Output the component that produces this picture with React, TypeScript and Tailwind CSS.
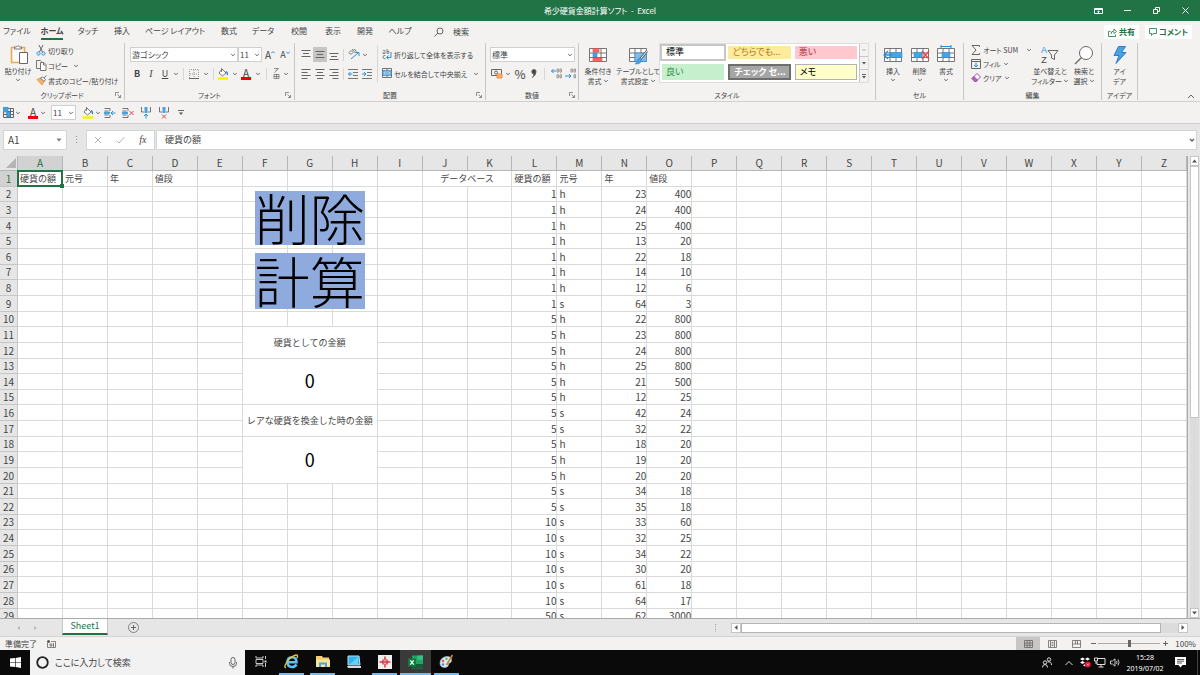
import type { ReactNode } from 'react';
import { clsx } from 'clsx';

const columns = 'ABCDEFGHIJKLMNOPQRSTUVWXYZ'.split('');

// 硬貨の額, 元号, 年, 値段
const coins: [number, string, number, number][] = [
  [1, 'h', 23, 400],
  [1, 'h', 24, 400],
  [1, 'h', 25, 400],
  [1, 'h', 13, 20],
  [1, 'h', 22, 18],
  [1, 'h', 14, 10],
  [1, 'h', 12, 6],
  [1, 's', 64, 3],
  [5, 'h', 22, 800],
  [5, 'h', 23, 800],
  [5, 'h', 24, 800],
  [5, 'h', 25, 800],
  [5, 'h', 21, 500],
  [5, 'h', 12, 25],
  [5, 's', 42, 24],
  [5, 's', 32, 22],
  [5, 'h', 18, 20],
  [5, 'h', 19, 20],
  [5, 'h', 20, 20],
  [5, 's', 34, 18],
  [5, 's', 35, 18],
  [10, 's', 33, 60],
  [10, 's', 32, 25],
  [10, 's', 34, 22],
  [10, 's', 30, 20],
  [10, 's', 61, 18],
  [10, 's', 64, 17],
  [50, 's', 62, 3000],
];

const headings: Record<string, string> = {
  A: '硬貨の額',
  B: '元号',
  C: '年',
  D: '値段',
  L: '硬貨の額',
  M: '元号',
  N: '年',
  O: '値段',
};

interface Merge {
  col: number;
  row: number;
  cols: number;
  rows: number;
  text: string;
  className: string;
}

const merges: Merge[] = [
  { col: 9, row: 1, cols: 2, rows: 1, text: 'データベース', className: 'p-0 text-[9px]' },
  { col: 5, row: 11, cols: 3, rows: 2, text: '硬貨としての金額', className: 'p-0 text-[9px]' },
  { col: 5, row: 13, cols: 3, rows: 3, text: '0', className: 'p-0 pb-[3px] text-lg leading-none text-black' },
  { col: 5, row: 16, cols: 3, rows: 2, text: 'レアな硬貨を換金した時の金額', className: 'p-0 text-[9px]' },
  { col: 5, row: 18, cols: 3, rows: 3, text: '0', className: 'p-0 pb-[3px] text-lg leading-none text-black' },
];

const tabs = [
  { label: 'ファイル', width: 'w-[34px]' },
  { label: 'ホーム', width: 'w-9', active: true },
  { label: 'タッチ', width: 'w-9' },
  { label: '挿入', width: 'w-8' },
  { label: 'ページ レイアウト', width: 'w-[74px]' },
  { label: '数式', width: 'w-[34px]' },
  { label: 'データ', width: 'w-[34px]' },
  { label: '校閲', width: 'w-[38px]' },
  { label: '表示', width: 'w-[30px]' },
  { label: '開発', width: 'w-[34px]' },
  { label: 'ヘルプ', width: 'w-9' },
];

interface IconProps {
  w?: number;
  h?: number;
  className?: string;
  children: ReactNode;
}

function Icon({ w = 14, h = 14, className, children }: IconProps) {
  return (
    <svg
      width={w}
      height={h}
      viewBox={`0 0 ${w} ${h}`}
      fill="none"
      stroke="#666"
      className={clsx('shrink-0', className)}
      aria-hidden="true"
    >
      {children}
    </svg>
  );
}

function Chevron() {
  return (
    <Icon w={6} h={6}>
      <path d="M1.200 2L3 3.800 4.800 2" />
    </Icon>
  );
}

interface ToolProps {
  label: string;
  width?: string;
  className?: string;
  children: ReactNode;
}

function Tool({ label, width = 'w-[14px]', className, children }: ToolProps) {
  return (
    <button
      type="button"
      aria-label={label}
      className={clsx('flex h-[15px] shrink-0 items-center justify-center', width, className)}
    >
      {children}
    </button>
  );
}

function Divider({ className }: { className?: string }) {
  return <span className={clsx('w-px shrink-0 bg-[#d6d6d6]', className ?? 'h-3')} />;
}

interface GroupProps {
  label: string;
  width: string;
  launcher?: boolean;
  children: ReactNode;
}

function Group({ label, width, launcher, children }: GroupProps) {
  return (
    <section
      aria-label={label}
      className={clsx('flex h-[57px] shrink-0 flex-col border-r border-[#c8c6c4]', width)}
    >
      <div className="flex flex-1 items-start">{children}</div>
      <div className="flex h-[10px] items-center">
        {launcher && <span className="w-3" />}
        <span className="flex-1 text-center whitespace-nowrap">{label}</span>
        {launcher && (
          <button type="button" aria-label={`${label}の設定`} className="flex w-3 justify-center">
            <Icon w={6} h={6}>
              <path d="M.5 4V.5H4M2.500 2.500l3 3M5.500 3v2.500H3" strokeWidth=".7" />
            </Icon>
          </button>
        )}
      </div>
    </section>
  );
}

interface BigButtonProps {
  lines: string[];
  width: string;
  caret?: 'below' | 'inline';
  children: ReactNode;
}

function BigButton({ lines, width, caret, children }: BigButtonProps) {
  return (
    <button type="button" className={clsx('flex shrink-0 flex-col items-center whitespace-nowrap', width)}>
      <span className="flex h-[23px] items-center">{children}</span>
      {lines.map((line, i) => (
        <span key={line} className="flex h-[10px] items-center gap-px leading-[10px]">
          {line}
          {caret === 'inline' && i === lines.length - 1 && <Chevron />}
        </span>
      ))}
      {caret === 'below' && (
        <span className="flex h-2 items-center">
          <Chevron />
        </span>
      )}
    </button>
  );
}

function Combo({ label, value, width }: { label: string; value: string; width: string }) {
  return (
    <div className={clsx('flex h-[15px] shrink-0 items-center border border-[#d0d0d0] bg-white pr-px text-[8px]', width)}>
      <select aria-label={label} className="w-full min-w-0 flex-1 appearance-none bg-transparent pl-px leading-3 outline-none">
        <option>{value}</option>
      </select>
      <Chevron />
    </div>
  );
}

function FillIcon() {
  return (
    <Icon w={12} h={13}>
      <path d="M5 2l4 4-3.500 3L2 6z" fill="#fff" strokeWidth=".9" />
      <path d="M4.500 1v4" strokeWidth=".8" />
      <path d="M9 4.500q2 1 1.200 3.500" stroke="#2b7cd3" strokeWidth="1.300" />
      <path d="M1 11.500h10" stroke="#ffef00" strokeWidth="2.500" />
    </Icon>
  );
}

function FontColorIcon() {
  return (
    <span className="flex flex-col items-center">
      <span className="text-[10px] leading-[9px]">A</span>
      <span className="h-[3px] w-[10px] bg-[#f00000]" />
    </span>
  );
}

// Text lines used by the six alignment buttons
function LinesIcon({ d }: { d: string }) {
  return (
    <Icon w={10} h={12}>
      <path d={d} />
    </Icon>
  );
}

function IndentIcon({ out }: { out?: boolean }) {
  return (
    <Icon w={10} h={10}>
      <path d="M0 .5h10M5 3.500h5M5 6.500h5M0 9.500h10" strokeWidth=".9" />
      <path d={out ? 'M4.500 5H.5m2-2l-2 2 2 2' : 'M0 5h4m-2-2l2 2-2 2'} stroke="#2b8fd8" />
    </Icon>
  );
}

function DecimalIcon({ less }: { less?: boolean }) {
  return (
    <Icon w={11} h={11}>
      <g strokeWidth=".7">
        <rect x="6" y=".8" width="1.600" height="3.500" rx=".8" />
        <rect x="9" y=".8" width="1.600" height="3.500" rx=".8" />
        <rect x="6" y="6.500" width="1.600" height="3.500" rx=".8" opacity={less ? 0 : 1} />
        <rect x="9" y="6.500" width="1.600" height="3.500" rx=".8" />
      </g>
      <path d={less ? 'M0 8h6m-2-2l2 2-2 2' : 'M5 3H.5m2-2l-2 2 2 2'} stroke="#2b8fd8" />
    </Icon>
  );
}

function TableIcon({ children }: { children?: ReactNode }) {
  return (
    <Icon w={20} h={20}>
      <path d="M1.500 3.500h17v13h-17zM1.500 8h17M1.500 12.500h17M7 3.500v13M13 3.500v13" fill="#fff" strokeWidth=".9" />
      {children}
    </Icon>
  );
}

function QuickGridIcon({ kind }: { kind: 'insertRow' | 'deleteRow' | 'insertCol' | 'deleteCol' }) {
  const row = kind.endsWith('Row');
  const insert = kind.startsWith('insert');
  return (
    <Icon w={12} h={12}>
      {row ? (
        <>
          <path d="M.5 1.500h5.500v2.500M.5 10.500h5.500V8M.5 4h4M.5 8h4" strokeWidth=".9" />
          <path d="M0 6h6" stroke="#4aa3df" strokeWidth="2.500" />
          {insert && <path d="M11.500 6H7m2-2L7 6l2 2" stroke="#2b8fd8" />}
          {!insert && <path d="M7.500 4l4 4m0-4l-4 4" stroke="#e84545" />}
        </>
      ) : (
        <>
          <path d="M1.500 0v5H4M10.500 0v5H8" strokeWidth=".9" />
          <path d="M6 0v6" stroke="#4aa3df" strokeWidth="3" />
          {insert && <path d="M6 11.500V7M4 9l2-2 2 2" stroke="#2b8fd8" />}
          {!insert && <path d="M4 7.500l4 4m0-4l-4 4" stroke="#e84545" />}
        </>
      )}
    </Icon>
  );
}

function TitleBar() {
  return (
    <header className="flex h-[21px] shrink-0 items-center bg-[#217346] text-white">
      <div className="flex-1" />
      <h1>希少硬貨金額計算ソフト&nbsp; -&nbsp; Excel</h1>
      <div className="flex flex-1 justify-end">
        <Tool label="リボンの表示オプション" width="w-[29px]">
          <Icon w={9} h={8} className="stroke-white">
            <path d="M.5 1.500h8v5h-8zM.5 2.500h8M4.500 6V4M3.500 4.800l1-1 1 1" />
          </Icon>
        </Tool>
        <Tool label="最小化" width="w-[29px]">
          <Icon w={7} h={7} className="stroke-white">
            <path d="M0 3.500h7" />
          </Icon>
        </Tool>
        <Tool label="元に戻す" width="w-[29px]">
          <Icon w={7} h={7} className="stroke-white">
            <path d="M.5 2.500h4v4h-4zM2.500 2V.5h4v4H5" />
          </Icon>
        </Tool>
        <Tool label="閉じる" width="w-[29px]">
          <Icon w={7} h={7} className="stroke-white">
            <path d="M.5.5l6 6m0-6l-6 6" />
          </Icon>
        </Tool>
      </div>
    </header>
  );
}

function TabBar() {
  return (
    <nav className="flex h-[22px] shrink-0 items-center pr-2">
      {tabs.map((tab) => (
        <button
          key={tab.label}
          type="button"
          className={clsx('flex shrink-0 justify-center whitespace-nowrap', tab.width, tab.active && 'font-bold')}
        >
          <span className={clsx('border-b-2 py-px leading-3', tab.active ? 'border-[#217346]' : 'border-transparent')}>
            {tab.label}
          </span>
        </button>
      ))}
      <button type="button" className="ml-4 flex items-center gap-[9px]">
        <Icon w={10} h={10}>
          <circle cx="6" cy="4" r="3" />
          <path d="M4 6L.5 9.500" />
        </Icon>
        検索
      </button>
      <div className="ml-auto flex gap-[6px] font-bold text-[#217346]">
        <button type="button" className="flex h-[14px] items-center gap-[2px] bg-white px-1">
          <Icon w={9} h={9} className="stroke-[#217346]">
            <path d="M2.500 3.500h-2v5h7v-2M3 6q0-3 3-3V1l2.500 2.500L6 5.500V4" strokeWidth=".8" />
          </Icon>
          共有
        </button>
        <button type="button" className="flex h-[14px] items-center gap-[2px] bg-white px-1">
          <Icon w={8} h={8} className="stroke-[#217346]">
            <path d="M.5.5h7v5H4l-1.500 2v-2h-2z" strokeWidth=".8" />
          </Icon>
          コメント
        </button>
      </div>
    </nav>
  );
}

function ClipboardGroup() {
  return (
    <Group label="クリップボード" width="w-[125px]" launcher>
      <BigButton lines={['貼り付け']} width="w-9" caret="below">
        <Icon w={20} h={21} className="ml-1">
          <path d="M1.500 3.500h13v15h-13z" stroke="#f0a94b" strokeWidth="1.600" fill="#fafafa" />
          <path d="M4.500 5V3h2q1.500-3 3 0h2v2z" fill="#fff" strokeWidth=".9" />
          <path d="M9.500 8.500h8v11h-8z" fill="#fff" />
        </Icon>
      </BigButton>
      <div className="flex flex-col">
        <button type="button" className="flex h-[15px] items-center gap-[2px]">
          <Icon w={10} h={11}>
            <path d="M3 0l3.500 7M7 0L3.500 7" />
            <circle cx="2.500" cy="8.500" r="1.600" stroke="#2b8fd8" />
            <circle cx="7.500" cy="8.500" r="1.600" stroke="#2b8fd8" />
          </Icon>
          切り取り
        </button>
        <button type="button" className="flex h-[15px] items-center gap-px">
          <Icon w={11} h={11}>
            <path d="M4 8.500H.5v-8h4l1 1" strokeWidth=".9" />
            <path d="M4.500 2.500h3.500l2 2v6H4.500zM7.500 3v2h2" strokeWidth=".9" fill="#fff" />
          </Icon>
          コピー
          <span className="ml-1">
            <Chevron />
          </span>
        </button>
        <button type="button" className="flex h-[15px] items-center gap-px whitespace-nowrap">
          <Icon w={11} h={11}>
            <path d="M1 4.500l5 5.500 2-3.500L4.500 3z" fill="#f6b26b" stroke="#ee9a45" />
            <path d="M4.500 3l3.500 3.500 1.500-2L6.500 2zM8 3l2.500-2.500" fill="#fff" strokeWidth=".9" />
          </Icon>
          書式のコピー/貼り付け
        </button>
      </div>
    </Group>
  );
}

function FontGroup() {
  return (
    <Group label="フォント" width="w-[170px]" launcher>
      <div className="flex flex-col gap-1 pt-1 pl-[5px]">
        <div className="flex items-center">
          <Combo label="フォント名" value="游ゴシック" width="w-[108px]" />
          <Combo label="フォント サイズ" value="11" width="w-6" />
          <Tool label="フォント サイズの拡大" width="w-4">
            <span className="text-[10px]">A</span>
            <Icon w={4} h={8}>
              <path d="M0 2.500l2-2 2 2" stroke="#2b8fd8" />
            </Icon>
          </Tool>
          <Tool label="フォント サイズの縮小">
            <span className="text-[9px]">A</span>
            <Icon w={4} h={8}>
              <path d="M0 .5l2 2 2-2" stroke="#2b8fd8" />
            </Icon>
          </Tool>
        </div>
        <div className="flex items-center">
          <Tool label="太字">
            <b className="text-[9px]">B</b>
          </Tool>
          <Tool label="斜体">
            <i className="font-['Liberation_Serif',serif] text-[10px]">I</i>
          </Tool>
          <Tool label="下線">
            <u className="text-[9px]">U</u>
          </Tool>
          <Tool label="下線の種類" width="w-2">
            <Chevron />
          </Tool>
          <Divider className="mx-[3px] h-3" />
          <Tool label="罫線">
            <Icon w={10} h={10}>
              <path d="M.5 9V.5h9V9M5 1v8M1 5h8" strokeDasharray="1 1" stroke="#999" />
              <path d="M0 9.500h10" />
            </Icon>
          </Tool>
          <Tool label="罫線の種類" width="w-[10px]">
            <Chevron />
          </Tool>
          <Divider className="mx-[2px] h-3" />
          <Tool label="塗りつぶしの色">
            <FillIcon />
          </Tool>
          <Tool label="塗りつぶしの色を選択" width="w-[9px]">
            <Chevron />
          </Tool>
          <Tool label="フォントの色">
            <FontColorIcon />
          </Tool>
          <Tool label="フォントの色を選択" width="w-[10px]">
            <Chevron />
          </Tool>
          <Divider className="mx-[3px] h-3" />
          <Tool label="ふりがな" width="w-3">
            <Icon w={7} h={11}>
              <path d="M1 .5h4.500L3.500 2.500M3.500 1.500q0 2-2 3M1 6.500h5v4H1zM1 8.500h5M3.500 6v4.500" strokeWidth=".7" />
            </Icon>
          </Tool>
          <Tool label="ふりがなの設定" width="w-2">
            <Chevron />
          </Tool>
        </div>
      </div>
    </Group>
  );
}

function AlignGroup() {
  return (
    <Group label="配置" width="w-[191px]" launcher>
      <div className="flex flex-col gap-1 pt-1 pl-1">
        <div className="flex items-center">
          <Tool label="上揃え">
            <LinesIcon d="M.5 1.500h9M2 4.500h6M.5 7.500h9" />
          </Tool>
          <Tool label="上下中央揃え" className="bg-[#c8c6c4]">
            <LinesIcon d="M.5 2.500h9M2 5.500h6M.5 8.500h9" />
          </Tool>
          <Tool label="下揃え">
            <LinesIcon d="M.5 4.500h9M2 7.500h6M.5 10.500h9" />
          </Tool>
          <Divider className="mx-[2px] h-3" />
          <Tool label="方向" width="w-4">
            <Icon w={12} h={11}>
              <path d="M1 3.500l2-2 2 2-1.500 1.500Q2 6 1 3.500M4 0l3 3.500q2-1 .5-2.500T5 1.500" strokeWidth=".8" />
              <path d="M3 10l7-6M7.500 3.500H11V7" stroke="#2b8fd8" />
            </Icon>
          </Tool>
          <Chevron />
        </div>
        <div className="flex items-center">
          <Tool label="左揃え">
            <LinesIcon d="M.5 1.500h9M.5 4.500h6M.5 7.500h9M.5 10.500h6" />
          </Tool>
          <Tool label="中央揃え">
            <LinesIcon d="M.5 1.500h9M2 4.500h6M.5 7.500h9M2 10.500h6" />
          </Tool>
          <Tool label="右揃え">
            <LinesIcon d="M.5 1.500h9M3.500 4.500h6M.5 7.500h9M3.500 10.500h6" />
          </Tool>
          <Divider className="mx-[2px] h-3" />
          <Tool label="インデントを減らす">
            <IndentIcon out />
          </Tool>
          <Tool label="インデントを増やす">
            <IndentIcon />
          </Tool>
        </div>
      </div>
      <Divider className="mt-[3px] ml-[3px] h-[37px]" />
      <div className="flex flex-col gap-1 pt-1 pl-1">
        <button type="button" className="flex h-[15px] items-center gap-[2px] whitespace-nowrap">
          <Icon w={10} h={11}>
            <path d="M1 1.500q2-1 2 1v2q-3 .5-2-1.500M5 0v4.500q3 0 2-2-1-1-2 0M3.500 6.500Q1 6 1 8t2.500 1.800" strokeWidth=".8" />
            <path d="M9 3v5.500H5m1.500-2l-2 2 2 2" stroke="#2b8fd8" />
          </Icon>
          折り返して全体を表示する
        </button>
        <button type="button" className="flex h-[15px] items-center gap-[2px] whitespace-nowrap">
          <Icon w={10} h={11}>
            <path d="M.5.5h9v9h-9zM.5 3h9M.5 7h9M5 .5V3M5 7v2.500" strokeWidth=".9" />
            <path d="M1 3h8v4H1z" fill="#cfe6f7" stroke="#2b8fd8" />
            <path d="M2.500 5h5" stroke="#2b8fd8" />
          </Icon>
          セルを結合して中央揃え
          <span className="ml-1">
            <Chevron />
          </span>
        </button>
      </div>
    </Group>
  );
}

function NumberGroup() {
  return (
    <Group label="数値" width="w-[93px]" launcher>
      <div className="flex flex-col gap-1 pt-1 pl-1">
        <Combo label="表示形式" value="標準" width="w-[85px]" />
        <div className="flex items-center">
          <Tool label="通貨表示形式">
            <Icon w={12} h={11}>
              <path d="M.5 1.500h10v6H.5z" />
              <circle cx="5" cy="4.500" r="1.500" />
              <path d="M6 6h5v4H6z" fill="#f6b26b" stroke="#ee8a45" />
            </Icon>
          </Tool>
          <Tool label="通貨の種類" width="w-2">
            <Chevron />
          </Tool>
          <Tool label="パーセント スタイル" width="w-4">
            <span className="text-xs">%</span>
          </Tool>
          <Tool label="桁区切りスタイル" width="w-3">
            <Icon w={6} h={9}>
              <path d="M3 .5a2 2 0 012 2.200Q5 6 1.500 8.500 3 6.500 3 5a2 2 0 010-4.500z" fill="#444" />
            </Icon>
          </Tool>
          <Divider className="mx-1 h-3" />
          <Tool label="小数点以下の表示桁数を増やす">
            <DecimalIcon />
          </Tool>
          <Tool label="小数点以下の表示桁数を減らす">
            <DecimalIcon less />
          </Tool>
        </div>
      </div>
    </Group>
  );
}

const cellStyles = [
  { label: '標準', className: 'bg-white text-black outline-2 outline-[#c6c6c6]' },
  { label: 'どちらでも...', className: 'bg-[#ffeb9c] text-[#b07a1e]' },
  { label: '悪い', className: 'bg-[#ffc7ce] text-[#b03040]' },
  { label: '良い', className: 'bg-[#c6efce] text-[#2f8a3f]' },
  { label: 'チェック セ...', className: 'bg-[#a5a5a5] font-bold text-white border-2 border-[#6e6e6e]' },
  { label: 'メモ', className: 'bg-[#ffffcc] text-black border border-[#b2b2b2]' },
];

function StylesGroup() {
  return (
    <Group label="スタイル" width="w-[297px]">
      <BigButton lines={['条件付き', '書式']} width="w-[38px]" caret="inline">
        <TableIcon>
          <path d="M5 3.500h6v3.500H5zM5 13h9v3.500H5z" fill="#f66" stroke="#e84545" strokeWidth=".6" />
          <path d="M5 8h4v4H5z" fill="#4aa3df" stroke="#2b8fd8" strokeWidth=".6" />
        </TableIcon>
      </BigButton>
      <BigButton lines={['テーブルとして', '書式設定']} width="w-[42px]" caret="inline">
        <TableIcon>
          <path d="M7 8h11.500v8.500H7z" fill="#7dbdea" stroke="#2b8fd8" strokeWidth=".6" />
          <path d="M19 6l-6.500 8" stroke="#555" strokeWidth="2.500" />
          <path d="M19 6l-6.500 8" stroke="#fff" />
          <path d="M12 13q2 1 1.500 3.500-2 3-6.500 2.500 2-1 2-3 1-2.500 3-3z" fill="#4aa3df" stroke="#2b7cd3" strokeWidth=".6" />
        </TableIcon>
      </BigButton>
      <div className="flex h-10 border border-[#dedede] bg-white">
        <div className="grid w-[199px] grid-cols-3 gap-x-1 gap-y-[5px] p-[2px]">
          {cellStyles.map((s) => (
            <button
              key={s.label}
              type="button"
              className={clsx('flex items-center overflow-hidden pl-1 text-[9px] leading-3 whitespace-nowrap', s.className)}
            >
              {s.label}
            </button>
          ))}
        </div>
        <div className="flex w-[9px] flex-col divide-y divide-[#c6c6c6] border-l border-[#c6c6c6] bg-[#f3f2f1]">
          <button type="button" aria-label="前のスタイル" className="flex flex-1 items-center justify-center">
            <Icon w={6} h={6}>
              <path d="M1 4l2-2 2 2" stroke="#bbb" />
            </Icon>
          </button>
          <button type="button" aria-label="次のスタイル" className="flex flex-1 items-center justify-center">
            <Icon w={6} h={6}>
              <path d="M1 2h4L3 4.500z" fill="#555" stroke="none" />
            </Icon>
          </button>
          <button type="button" aria-label="その他のスタイル" className="flex flex-1 items-center justify-center">
            <Icon w={6} h={6}>
              <path d="M1 3h4L3 5.500z" fill="#555" stroke="none" />
              <path d="M1 1.500h4" />
            </Icon>
          </button>
        </div>
      </div>
    </Group>
  );
}

function CellsGroup() {
  return (
    <Group label="セル" width="w-[88px]">
      <div className="flex pl-1">
        <BigButton lines={['挿入']} width="w-[26px]" caret="below">
          <TableIcon>
            <path d="M7 7.500h12v5H7z" fill="#4aa3df" stroke="#2b8fd8" strokeWidth=".6" />
            <path d="M9 10H1m4-4l-4 4 4 4" stroke="#2b8fd8" strokeWidth="1.300" />
          </TableIcon>
        </BigButton>
        <BigButton lines={['削除']} width="w-[27px]" caret="below">
          <TableIcon>
            <path d="M4 7.500h8v5H4z" fill="#4aa3df" stroke="#2b8fd8" strokeWidth=".6" />
            <path d="M12 6l7 8m0-8l-7 8" stroke="#e84545" strokeWidth="1.300" />
          </TableIcon>
        </BigButton>
        <BigButton lines={['書式']} width="w-[26px]" caret="below">
          <TableIcon>
            <path d="M6 7.500h8v5H6z" fill="#4aa3df" stroke="#2b8fd8" strokeWidth=".6" />
            <path d="M5 1.500h10M5 0v3M15 0v3" stroke="#2b8fd8" />
          </TableIcon>
        </BigButton>
      </div>
    </Group>
  );
}

function EditGroup() {
  return (
    <Group label="編集" width="w-[138px]">
      <div className="flex w-[68px] flex-col pl-[7px]">
        <button type="button" className="flex h-[14px] items-center gap-[2px] whitespace-nowrap">
          <Icon w={10} h={10}>
            <path d="M8.500 2V.5H1l4 4.500-4 4.500h7.500V8" />
          </Icon>
          オート SUM
          <span className="ml-auto">
            <Chevron />
          </span>
        </button>
        <button type="button" className="flex h-[14px] items-center gap-[2px]">
          <Icon w={10} h={10}>
            <path d="M.5.5h9v9h-9zM.5 2.500h9" />
            <path d="M5 3.500V8M3 6l2 2 2-2" stroke="#2b8fd8" />
          </Icon>
          フィル
          <Chevron />
        </button>
        <button type="button" className="flex h-[14px] items-center gap-[2px]">
          <Icon w={10} h={10}>
            <path d="M1 5.500L6 .5l3.500 3.500-5 5z" fill="#fff" stroke="#a349a4" />
            <path d="M1 5.500l2-2L6.500 7l-2 2z" fill="#b565c6" stroke="#a349a4" />
          </Icon>
          クリア
          <Chevron />
        </button>
      </div>
      <BigButton lines={['並べ替えと', 'フィルター']} width="w-9" caret="inline">
        <span className="flex flex-col font-['Liberation_Sans',sans-serif] text-[9px] leading-[10px]">
          <span className="text-[#2b8fd8]">A</span>
          <span>Z</span>
        </span>
        <Icon w={12} h={12}>
          <path d="M1 1.500h10L7.500 6v4.500l-3-1.500V6z" />
        </Icon>
      </BigButton>
      <BigButton lines={['検索と', '選択']} width="w-8" caret="inline">
        <Icon w={20} h={20}>
          <circle cx="12" cy="8" r="6.500" fill="#fff" />
          <path d="M7.500 12.500L1 19" strokeWidth="1.300" />
        </Icon>
      </BigButton>
    </Group>
  );
}

function Ribbon() {
  return (
    <div className="flex h-[59px] shrink-0 border-b border-[#d0cece] text-[7px]">
      <ClipboardGroup />
      <FontGroup />
      <AlignGroup />
      <NumberGroup />
      <StylesGroup />
      <CellsGroup />
      <EditGroup />
      <Group label="アイデア" width="w-9">
        <BigButton lines={['アイ', 'デア']} width="w-[35px]">
          <Icon w={16} h={20}>
            <path d="M6.500 1.500h7l-4 6h4.500L4 18.500l3-8H2z" fill="#4aa3df" stroke="#2b7cd3" />
          </Icon>
        </BigButton>
      </Group>
      <button type="button" aria-label="リボンを折りたたむ" className="mt-auto mr-[5px] mb-[2px] ml-auto">
        <Icon w={8} h={6}>
          <path d="M1 5l3-3 3 3" />
        </Icon>
      </button>
    </div>
  );
}

function QuickAccess() {
  return (
    <div className="flex h-[22px] shrink-0 items-center border-b border-[#d0cece] pl-[2px]">
      <Tool label="テーブル" width="w-3" className="mr-px">
        <Icon w={11} h={11}>
          <path d="M.5 1.500h10v9H.5zM.5 4.500h10M.5 7.500h10M4 1.500v9M7.500 1.500v9" />
          <path d="M0 0h5v5H0zM4 5h3v5H4z" fill="#4aa3df" stroke="#2b8fd8" strokeWidth=".6" />
        </Icon>
      </Tool>
      <Chevron />
      <Tool label="フォントの色" className="ml-[5px]">
        <FontColorIcon />
      </Tool>
      <Chevron />
      <span className="w-[5px]" />
      <Combo label="サイズ" value="11" width="w-[25px]" />
      <Tool label="塗りつぶしの色" className="ml-[5px]">
        <FillIcon />
      </Tool>
      <Chevron />
      <Tool label="行の挿入" width="w-[18px]">
        <QuickGridIcon kind="insertRow" />
      </Tool>
      <Tool label="行の削除" width="w-[18px]">
        <QuickGridIcon kind="deleteRow" />
      </Tool>
      <Tool label="列の挿入" width="w-[18px]">
        <QuickGridIcon kind="insertCol" />
      </Tool>
      <Tool label="列の削除" width="w-[18px]">
        <QuickGridIcon kind="deleteCol" />
      </Tool>
      <Tool label="クイック アクセス ツール バーのユーザー設定" width="w-4">
        <Icon w={6} h={6}>
          <path d="M0 .5h6" />
          <path d="M1 2.500h4L3 5z" fill="#555" stroke="none" />
        </Icon>
      </Tool>
    </div>
  );
}

function FormulaBar() {
  return (
    <div className="flex h-8 shrink-0 items-center bg-[#e6e6e6] pr-[3px] pb-px pl-[3px]">
      <div className="flex h-5 w-16 items-center border border-[#d4d4d4] bg-white pr-1">
        <input aria-label="名前ボックス" defaultValue="A1" className="min-w-0 flex-1 bg-transparent pl-1 text-[10px] outline-none" />
        <Icon w={6} h={6}>
          <path d="M.5 1.500h5L3 4.500z" fill="#777" stroke="none" />
        </Icon>
      </div>
      <Icon w={19} h={10}>
        <path d="M9.500 1v8" strokeDasharray="1 2" stroke="#999" />
      </Icon>
      <div className="flex h-5 w-[69px] items-center justify-around border border-[#d4d4d4] bg-white">
        <Tool label="キャンセル">
          <Icon w={8} h={8}>
            <path d="M1 1l6 6m0-6L1 7" stroke="#b5b5b5" />
          </Icon>
        </Tool>
        <Tool label="入力">
          <Icon w={9} h={8}>
            <path d="M.5 4.500l2.500 2.500 5.500-6" stroke="#b5b5b5" />
          </Icon>
        </Tool>
        <Tool label="関数の挿入">
          <i className="font-['Liberation_Serif',serif] text-[10px]">fx</i>
        </Tool>
      </div>
      <div className="ml-px flex h-5 flex-1 items-center border border-[#d4d4d4] bg-white pr-px">
        <input aria-label="数式バー" defaultValue="硬貨の額" className="min-w-0 flex-1 bg-transparent pl-2 text-[9px] [font-feature-settings:normal] outline-none" />
        <Icon w={6} h={6}>
          <path d="M1 2l2 2 2-2" strokeWidth="1.500" />
        </Icon>
      </div>
    </div>
  );
}

function cellValue(letter: string, row: number): string | number | undefined {
  if (row === 1) return headings[letter];
  const at = 'LMNO'.indexOf(letter);
  return at < 0 ? undefined : coins[row - 2][at];
}

function SheetCell({ col, row }: { col: number; row: number }) {
  const border = 'border-r border-b border-[#dadada]';
  const merge = merges.find(
    (m) => col >= m.col && col < m.col + m.cols && row >= m.row && row < m.row + m.rows,
  );
  if (merge) {
    if (merge.col !== col || merge.row !== row) return null;
    return (
      <td
        colSpan={merge.cols}
        rowSpan={merge.rows}
        className={clsx(border, 'text-center whitespace-nowrap', merge.className)}
      >
        {merge.text}
      </td>
    );
  }

  const letter = columns[col];
  const value = cellValue(letter, row);

  if (letter === 'A' && row === 1) {
    return (
      <td className={clsx(border, 'relative py-0 pr-0 pl-[2px] text-[9px] whitespace-nowrap')}>
        {value}
        <span className="absolute -inset-px border-2 border-[#217346]" />
        <span className="absolute -right-[2px] -bottom-[2px] size-1 bg-[#217346]" />
      </td>
    );
  }

  // The two macro buttons float over F2:H9
  if (letter === 'F' && row === 2) {
    return (
      <td className={clsx(border, 'relative p-0')}>
        <div className="absolute top-1 left-3 z-10 flex w-[110px] flex-col gap-2 text-[55px] leading-none font-light text-black">
          <button type="button" className="flex h-[54px] items-center justify-center bg-[#8faadc] pb-1">
            削除
          </button>
          <button type="button" className="flex h-14 items-center justify-center bg-[#8faadc] pb-1">
            計算
          </button>
        </div>
      </td>
    );
  }

  const numeric = typeof value === 'number';
  return (
    <td
      className={clsx(
        border,
        'py-0 whitespace-nowrap',
        numeric ? 'pr-0 text-right' : 'pr-0 pl-[2px]',
        row === 1 ? 'text-[9px]' : 'text-[10px]',
      )}
    >
      {value}
    </td>
  );
}

function Sheet() {
  return (
    <div className="flex min-h-0 flex-1 bg-[#e6e6e6]">
      <div className="min-w-0 flex-1 overflow-hidden border-r border-[#ababab]">
        <table className="w-full table-fixed border-separate border-spacing-0 bg-white leading-3 text-[#444] [font-feature-settings:normal]">
          <thead>
            <tr className="h-[15px] bg-[#e6e6e6] text-[10px]">
              <th aria-label="すべて選択" className="w-[18px] border-r border-b border-[#b5b5b5] p-0">
                <Icon w={11} h={11} className="ml-auto">
                  <path d="M10 0v10H0z" fill="#b5b5b5" stroke="none" />
                </Icon>
              </th>
              {columns.map((letter) => (
                <th
                  key={letter}
                  scope="col"
                  className={clsx(
                    'border-r border-b p-0 font-normal',
                    letter === 'A' ? 'border-r-[#b5b5b5] border-b-[#217346] bg-[#d2d2d2] text-[#217346]' : 'border-[#b5b5b5]',
                  )}
                >
                  {letter}
                </th>
              ))}
            </tr>
          </thead>
          <tbody>
            {[...Array(29)].map((_, i) => (
              // rows average 15.6px: five tall ones to every three short ones
              <tr key={i} className={i % 8 === 1 || i % 8 === 4 || i % 8 === 6 ? 'h-[15px]' : 'h-4'}>
                <th
                  scope="row"
                  className={clsx(
                    'border-r border-b border-[#c6c6c6] p-0 text-[10px] font-normal',
                    i === 0 ? 'bg-[#d2d2d2] text-[#217346]' : 'bg-[#e6e6e6]',
                  )}
                >
                  {i + 1}
                </th>
                {columns.map((letter, col) => (
                  <SheetCell key={letter} col={col} row={i + 1} />
                ))}
              </tr>
            ))}
          </tbody>
        </table>
      </div>
      <div className="flex w-3 flex-col items-center">
        <button type="button" aria-label="上へスクロール" className="flex h-[10px] w-[9px] items-center justify-center border border-[#c6c6c6] bg-white">
          <Icon w={5} h={4}>
            <path d="M0 3.500h5L2.500.5z" fill="#555" stroke="none" />
          </Icon>
        </button>
        <div className="w-[9px] flex-1 bg-[#dcdcdc]">
          <div className="h-[57%] border border-[#c6c6c6] bg-white" />
        </div>
        <button type="button" aria-label="下へスクロール" className="flex h-[10px] w-[9px] items-center justify-center border border-[#c6c6c6] bg-white">
          <Icon w={5} h={4}>
            <path d="M0 .5h5l-2.500 3z" fill="#555" stroke="none" />
          </Icon>
        </button>
      </div>
    </div>
  );
}

function SheetTabs() {
  return (
    <div className="flex h-[18px] shrink-0 items-center border-t border-[#ababab] bg-[#e6e6e6] pr-3">
      <div className="flex w-[62px] justify-center gap-3 pr-2">
        <Icon w={5} h={6}>
          <path d="M4 1v4L1 3z" fill="#bbb" stroke="none" />
        </Icon>
        <Icon w={5} h={6}>
          <path d="M1 1v4l3-2z" fill="#bbb" stroke="none" />
        </Icon>
      </div>
      <button
        type="button"
        className="flex h-4 w-[46px] items-center justify-center self-start border-x border-b-2 border-x-[#c6c6c6] border-b-[#217346] bg-white text-[9px] text-[#217346]"
      >
        Sheet1
      </button>
      <button type="button" aria-label="新しいシート" className="ml-5">
        <Icon w={11} h={11}>
          <circle cx="5.500" cy="5.500" r="5" stroke="#777" strokeWidth=".9" />
          <path d="M5.500 3v5M3 5.500h5" stroke="#666" />
        </Icon>
      </button>
      <div className="ml-auto flex w-[40%] items-center">
        <Icon w={3} h={8} className="mr-[14px] ml-px">
          <path d="M1.500 0v8" strokeDasharray="1 1.500" stroke="#999" />
        </Icon>
        <button type="button" aria-label="左へスクロール" className="flex h-[10px] w-[10px] items-center justify-center border border-[#c6c6c6] bg-white">
          <Icon w={4} h={5}>
            <path d="M3.500 0v5L.5 2.500z" fill="#555" stroke="none" />
          </Icon>
        </button>
        <div className="h-[10px] flex-1 bg-[#dcdcdc]">
          <div className="h-full w-[96%] border border-[#b5b5b5] bg-white" />
        </div>
        <button type="button" aria-label="右へスクロール" className="flex h-[10px] w-[10px] items-center justify-center border border-[#c6c6c6] bg-white">
          <Icon w={4} h={5}>
            <path d="M.5 0v5l3-2.500z" fill="#555" stroke="none" />
          </Icon>
        </button>
      </div>
    </div>
  );
}

function StatusBar() {
  return (
    <footer className="flex h-[14px] shrink-0 items-center border-t border-[#d4d4d4] pr-1 pl-[5px]">
      <span>準備完了</span>
      <Icon w={9} h={8} className="ml-[10px]">
        <path d="M.5 3v4.500h8v-6H4M2 5h5M4 3v4M6.500 3v4" strokeWidth=".8" />
        <circle cx="1.500" cy="1.500" r="1.500" fill="#555" stroke="none" />
      </Icon>
      <div className="ml-auto flex items-center">
        <Tool label="標準" width="w-6" className="max-h-[13px] bg-[#c8c6c4]">
          <Icon w={9} h={8}>
            <path d="M.5.5h8v7h-8zM.5 3h8M.5 5.200h8M3.200.5v7M5.800.5v7" strokeWidth=".8" />
          </Icon>
        </Tool>
        <Tool label="ページ レイアウト" width="w-6" className="max-h-[13px]">
          <Icon w={9} h={8}>
            <path d="M.5.5h8v7h-8zM2.500 1v6.500M6.500 1v6.500M3.500 2.500h2M3.500 4h2M3.500 5.500h2" strokeWidth=".8" />
          </Icon>
        </Tool>
        <Tool label="改ページ プレビュー" width="w-6" className="max-h-[13px]">
          <Icon w={9} h={8}>
            <path d="M.5.5h8v7h-8zM3.500.5V4h5M.5 4h3M5.500.5V4" strokeWidth=".8" />
          </Icon>
        </Tool>
        <Tool label="縮小" width="w-[10px]" className="max-h-[13px]">
          <Icon w={5} h={5}>
            <path d="M0 2.500h5" />
          </Icon>
        </Tool>
        <input
          type="range"
          aria-label="ズーム"
          defaultValue={50}
          className="h-2 w-[62px] appearance-none bg-[linear-gradient(#aaa,#aaa)] bg-[length:100%_1px] bg-center bg-no-repeat [&::-webkit-slider-thumb]:h-[7px] [&::-webkit-slider-thumb]:w-[3px] [&::-webkit-slider-thumb]:appearance-none [&::-webkit-slider-thumb]:bg-[#666]"
        />
        <Tool label="拡大" width="w-[10px]" className="max-h-[13px]">
          <Icon w={5} h={5}>
            <path d="M0 2.500h5M2.500 0v5" />
          </Icon>
        </Tool>
        <span className="ml-1 w-[22px] text-right">100%</span>
      </div>
    </footer>
  );
}

function TaskButton({ label, running, active, children }: { label: string; running?: boolean; active?: boolean; children: ReactNode }) {
  return (
    <button
      type="button"
      aria-label={label}
      className={clsx('flex h-full w-[31px] flex-col items-center', active && 'bg-[#3a3a3a]')}
    >
      <span className="flex flex-1 items-center">{children}</span>
      <span className={clsx('h-[2px]', active ? 'w-full' : 'w-[25px]', running && 'bg-[#76b9ed]')} />
    </button>
  );
}

function Taskbar() {
  return (
    <div className="flex h-[25px] shrink-0 items-center bg-[#0a0a0a] text-white">
      <button type="button" aria-label="スタート" className="flex w-[30px] justify-center">
        <Icon w={11} h={11}>
          <path d="M0 1.500L5 1v4.200H0zM5.600.9L11 0v5.200H5.600zM0 5.800h5V10l-5-.6zM5.600 5.800H11V11l-5.400-.9z" fill="#fff" stroke="none" />
        </Icon>
      </button>
      <div className="flex h-full w-[215px] items-center bg-[#f2f2f2] px-[6px]">
        <Icon w={13} h={13}>
          <circle cx="6.500" cy="6.500" r="5.300" stroke="#222" strokeWidth="1.800" />
        </Icon>
        <input
          aria-label="検索"
          placeholder="ここに入力して検索"
          className="ml-[6px] min-w-0 flex-1 bg-transparent text-[9px] text-[#333] outline-none placeholder:text-[#444]"
        />
        <Icon w={12} h={12}>
          <rect x="4" y=".5" width="4" height="7" rx="2" />
          <path d="M2.500 5v1.500q0 3 3.500 3t3.500-3V5M6 9.500v2" />
        </Icon>
      </div>
      <TaskButton label="タスク ビュー">
        <Icon w={12} h={11} className="stroke-[#ddd]">
          <path d="M1 0v2h7V0M1 11V9h7v2M1 3.500h7v4H1zM10.500 0v3M10.500 7v4" strokeWidth=".9" />
          <path d="M9.500 4.500h2v2h-2z" fill="#ddd" stroke="none" />
        </Icon>
      </TaskButton>
      <TaskButton label="Internet Explorer" running>
        <Icon w={15} h={15}>
          <path d="M12.500 10.500Q11 13 8 13q-4.500 0-4.500-5T8 3.200q4.500 0 4.500 5H4" stroke="#5cc3f5" strokeWidth="2.500" />
          <path d="M2 13.500Q-.5 14 2.500 8.500 7 2 12 1q2.500-.2 1 3" stroke="#f7c531" strokeWidth="1.300" />
        </Icon>
      </TaskButton>
      <TaskButton label="エクスプローラー" running>
        <Icon w={14} h={13}>
          <path d="M0 1h6l1 1.500h6V12H0z" fill="#f5cf6b" stroke="none" />
          <path d="M0 4.500h14V12H0z" fill="#ffe39b" stroke="none" />
          <path d="M3 12V7.500h8V12H9V9.500H5V12z" fill="#3fa9e8" stroke="none" />
        </Icon>
      </TaskButton>
      <TaskButton label="リモート デスクトップ">
        <Icon w={14} h={14}>
          <path d="M1 1h11l1 9H1z" fill="#2bb7ee" stroke="#c8d8e2" />
          <path d="M3 9L11 2v7z" fill="#68d0f7" stroke="none" />
          <path d="M0 11h14v2H1z" fill="#d6dde2" stroke="none" />
        </Icon>
      </TaskButton>
      <TaskButton label="ツール" running>
        <Icon w={14} h={14}>
          <path d="M0 0h14v14H0z" fill="#f0eeee" stroke="none" />
          <path d="M7 1.500v4M7 8.500v4M1.500 7H5M9 7h3.500M5 4.500v5M9 4.500v5M5 7h4" stroke="#d8393b" strokeWidth="1.500" />
        </Icon>
      </TaskButton>
      <TaskButton label="Excel" running active>
        <Icon w={15} h={14}>
          <path d="M4 .5h11v13H4z" fill="#21a366" stroke="none" />
          <path d="M9.500.5H15v4.300H9.500z" fill="#33c481" stroke="none" />
          <path d="M4 9h11v4.500H4z" fill="#185c37" stroke="none" />
          <path d="M0 3.500h8v8H0z" fill="#107c41" stroke="none" />
          <path d="M2.300 5.300l3.400 4.400M5.700 5.300L2.300 9.700" stroke="#fff" strokeWidth="1.200" />
        </Icon>
      </TaskButton>
      <TaskButton label="ペイント" running>
        <Icon w={15} h={15}>
          <path d="M1 9q0-5 6-6.500Q13 2 12.500 7q-.5 2-3 2.500Q10 13 6 13.500 1 13.500 1 9z" fill="#d9e6ee" stroke="#a9c0cd" strokeWidth=".6" />
          <circle cx="4" cy="7" r="1.200" fill="#e8504a" stroke="none" />
          <circle cx="7.500" cy="4.800" r="1.200" fill="#58b957" stroke="none" />
          <circle cx="4" cy="10.500" r="1.200" fill="#3c8fe0" stroke="none" />
          <path d="M7.500 11L13.500 1" stroke="#c9853d" strokeWidth="1.600" />
        </Icon>
      </TaskButton>

      <div className="ml-auto flex h-full items-center">
        <Tool label="People" width="w-[26px]">
          <Icon w={10} h={11} className="stroke-[#ddd]">
            <circle cx="3" cy="5.500" r="1.700" />
            <path d="M.5 10.500Q.5 7.500 3 7.500t2.500 3" />
            <circle cx="7" cy="2.500" r="1.700" />
            <path d="M5.500 5Q9.500 4 9.500 8" />
          </Icon>
        </Tool>
        <Tool label="隠れているインジケーター" width="w-[18px]">
          <Icon w={8} h={6} className="stroke-[#ddd]">
            <path d="M.5 5L4 1.500 7.500 5" />
          </Icon>
        </Tool>
        <Tool label="Dropbox">
          <Icon w={11} h={11}>
            <path d="M2.500.5L5 2 2.500 3.500 0 2zM7.500.5L10 2 7.500 3.500 5 2zM2.500 4L5 5.500 2.500 7 0 5.500zM5 7l2 1.200-2 1.300-2-1.300z" fill="#fff" stroke="none" />
            <circle cx="7.800" cy="7.500" r="3" fill="#e01030" stroke="none" />
            <path d="M6.800 6.500l2 2m0-2l-2 2" stroke="#fff" strokeWidth=".7" />
          </Icon>
        </Tool>
        <Tool label="ネットワーク" width="w-4">
          <Icon w={12} h={11} className="stroke-[#ddd]">
            <path d="M4 1.500h7v6H3V5M7 7.500V10M4.500 10h5M.5 1h3v3h-3zM2 4v3" />
          </Icon>
        </Tool>
        <Tool label="音量">
          <Icon w={11} h={9} className="stroke-[#ddd]">
            <path d="M.5 3h2L5 .8v7.400L2.500 6h-2zM6.500 3q1 1.500 0 3M8 1.500q2 3 0 6" strokeWidth=".9" />
          </Icon>
        </Tool>
        <div className="w-[46px] text-center font-['Noto_Sans',sans-serif] text-[7px] leading-[11px]">
          <div>15:28</div>
          <div>2019/07/02</div>
        </div>
        <Tool label="通知" width="w-6">
          <Icon w={11} h={11}>
            <path d="M0 0h11v8H7.500L5.500 10.500 3.500 8H0z" fill="#fff" stroke="none" />
            <path d="M2 2.500h7M2 4.200h7M2 6h5" stroke="#111" strokeWidth=".7" />
          </Icon>
        </Tool>
        <span className="mr-[2px] ml-[5px] h-full w-px bg-[#444]" />
      </div>
    </div>
  );
}

export default function App() {
  return (
    <div
      lang="ja"
      className="flex h-screen flex-col overflow-hidden bg-[#f3f2f1] font-['Noto_Sans_CJK_JP',sans-serif] text-[8px] leading-3 text-[#444] [font-feature-settings:'palt']"
    >
      <TitleBar />
      <TabBar />
      <Ribbon />
      <QuickAccess />
      <FormulaBar />
      <Sheet />
      <SheetTabs />
      <StatusBar />
      <Taskbar />
    </div>
  );
}
